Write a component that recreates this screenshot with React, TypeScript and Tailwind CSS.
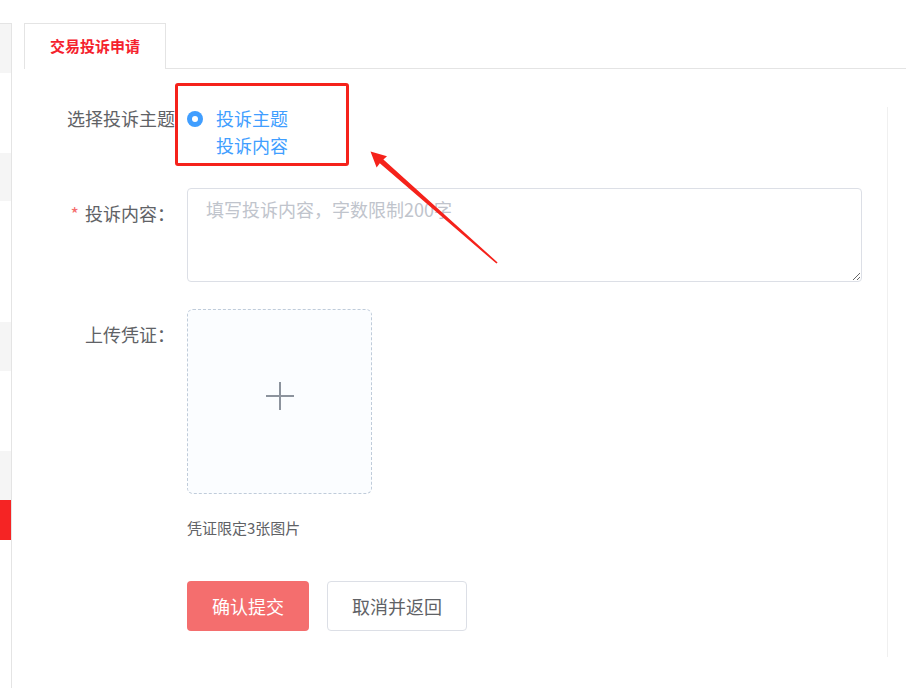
import React from 'react';

const font = { fontFamily: '"Noto Sans CJK SC", "Noto Sans", sans-serif' };

// 左侧菜单的色带（只露出了一条边）
const sideBands = [
  { h: 'h-[49px]', c: 'bg-[#f5f5f5]' },
  { h: 'h-[80px]', c: 'bg-white' },
  { h: 'h-[48px]', c: 'bg-[#f5f5f5]' },
  { h: 'h-[121px]', c: 'bg-white' },
  { h: 'h-[49px]', c: 'bg-[#f5f5f5]' },
  { h: 'h-[80px]', c: 'bg-white' },
  { h: 'h-[49px]', c: 'bg-[#f5f5f5]' },
  { h: 'h-[40px]', c: 'bg-[#f52424]' },
];

const Sidebar: React.FC = () => (
  <div className="w-[12px] shrink-0 mt-[23px] border-t border-r border-[#e4e4e4] flex flex-col">
    {sideBands.map((b, i) => (
      <div key={i} className={`${b.h} ${b.c} shrink-0`} />
    ))}
    <div className="flex-1 bg-white" />
  </div>
);

const Label: React.FC<{ children: React.ReactNode; required?: boolean }> = ({ children, required }) => (
  <div className="w-[151px] shrink-0 text-right text-[18px] leading-[26px] text-[#606266]">
    {required && <span className="text-[#f56c6c] mr-[6px]">*</span>}
    {children}
  </div>
);

// 截图上的标注箭头
const Arrow: React.FC = () => (
  <svg className="absolute inset-0 pointer-events-none" width="906" height="688" viewBox="0 0 906 688">
    <polygon
      points="370.5,151.5 387,156.2 383.4,159.6 497.6,262.4 496.4,263.6 379.8,163.3 376.6,167.4"
      fill="#f5221b"
    />
  </svg>
);

export default function App() {
  return (
    <div className="relative w-[906px] h-[688px] bg-white flex overflow-hidden" style={font}>
      <Sidebar />

      <div className="flex-1 ml-[12px] flex flex-col">
        {/* tab bar */}
        <div className="mt-[23px] flex border-b border-[#e4e4e4]">
          <div className="w-[142px] h-[46px] border-t border-l border-r border-[#e4e4e4] flex items-center justify-center text-[15px] font-bold text-[#f5222d] -mb-px bg-white">
            交易投诉申请
          </div>
        </div>

        <div className="flex flex-1">
          <div className="flex-1 pt-[36px]">
            {/* 选择投诉主题 */}
            <div className="relative flex">
              <Label>选择投诉主题</Label>
              <div className="ml-[12px] flex items-start">
                <span className="mt-[6px] w-[16px] h-[16px] rounded-full bg-[#409eff] flex items-center justify-center">
                  <span className="w-[6px] h-[6px] rounded-full bg-white" />
                </span>
                <div className="ml-[13px] text-[18px] leading-[27px] text-[#409eff]">
                  <div>投诉主题</div>
                  <div>投诉内容</div>
                </div>
              </div>
              <div className="absolute left-[151px] top-[-22px] w-[174px] h-[83px] border-[3px] border-[#f5221b] rounded-[3px]" />
            </div>

            {/* 投诉内容 */}
            <div className="flex mt-[29px]">
              <div className="pt-[12px]">
                <Label required>投诉内容：</Label>
              </div>
              <textarea
                className="ml-[12px] w-[675px] h-[94px] border border-[#dcdfe6] rounded-[4px] px-[18px] pt-[7px] text-[18px] leading-[26px] text-[#606266] placeholder:text-[#c0c4cc] outline-none"
                placeholder="填写投诉内容，字数限制200字"
                style={font}
              />
            </div>

            {/* 上传凭证 */}
            <div className="flex mt-[27px]">
              <div className="pt-[12px]">
                <Label>上传凭证：</Label>
              </div>
              <div className="ml-[12px]">
                <div className="w-[185px] h-[185px] border border-dashed border-[#c0ccda] rounded-[6px] bg-[#fbfdff] flex items-center justify-center pb-[11px]">
                  <svg width="28" height="28" viewBox="0 0 28 28">
                    <rect x="0" y="13" width="28" height="2" fill="#8c939d" />
                    <rect x="13" y="0" width="2" height="28" fill="#8c939d" />
                  </svg>
                </div>
                <div className="mt-[23px] text-[15px] leading-[22px] text-[#606266]">凭证限定3张图片</div>
                <div className="mt-[42px] flex gap-[18px]">
                  <button className="w-[122px] h-[50px] rounded-[4px] bg-[#f46e6e] text-white text-[18px]">
                    确认提交
                  </button>
                  <button className="w-[140px] h-[50px] rounded-[4px] border border-[#dcdfe6] bg-white text-[#606266] text-[18px]">
                    取消并返回
                  </button>
                </div>
              </div>
            </div>
          </div>
          <div className="w-px bg-[#f0f0f0] mt-[38px] h-[550px] shrink-0" />
          <div className="w-[18px] shrink-0" />
        </div>
      </div>

      <Arrow />
    </div>
  );
}
